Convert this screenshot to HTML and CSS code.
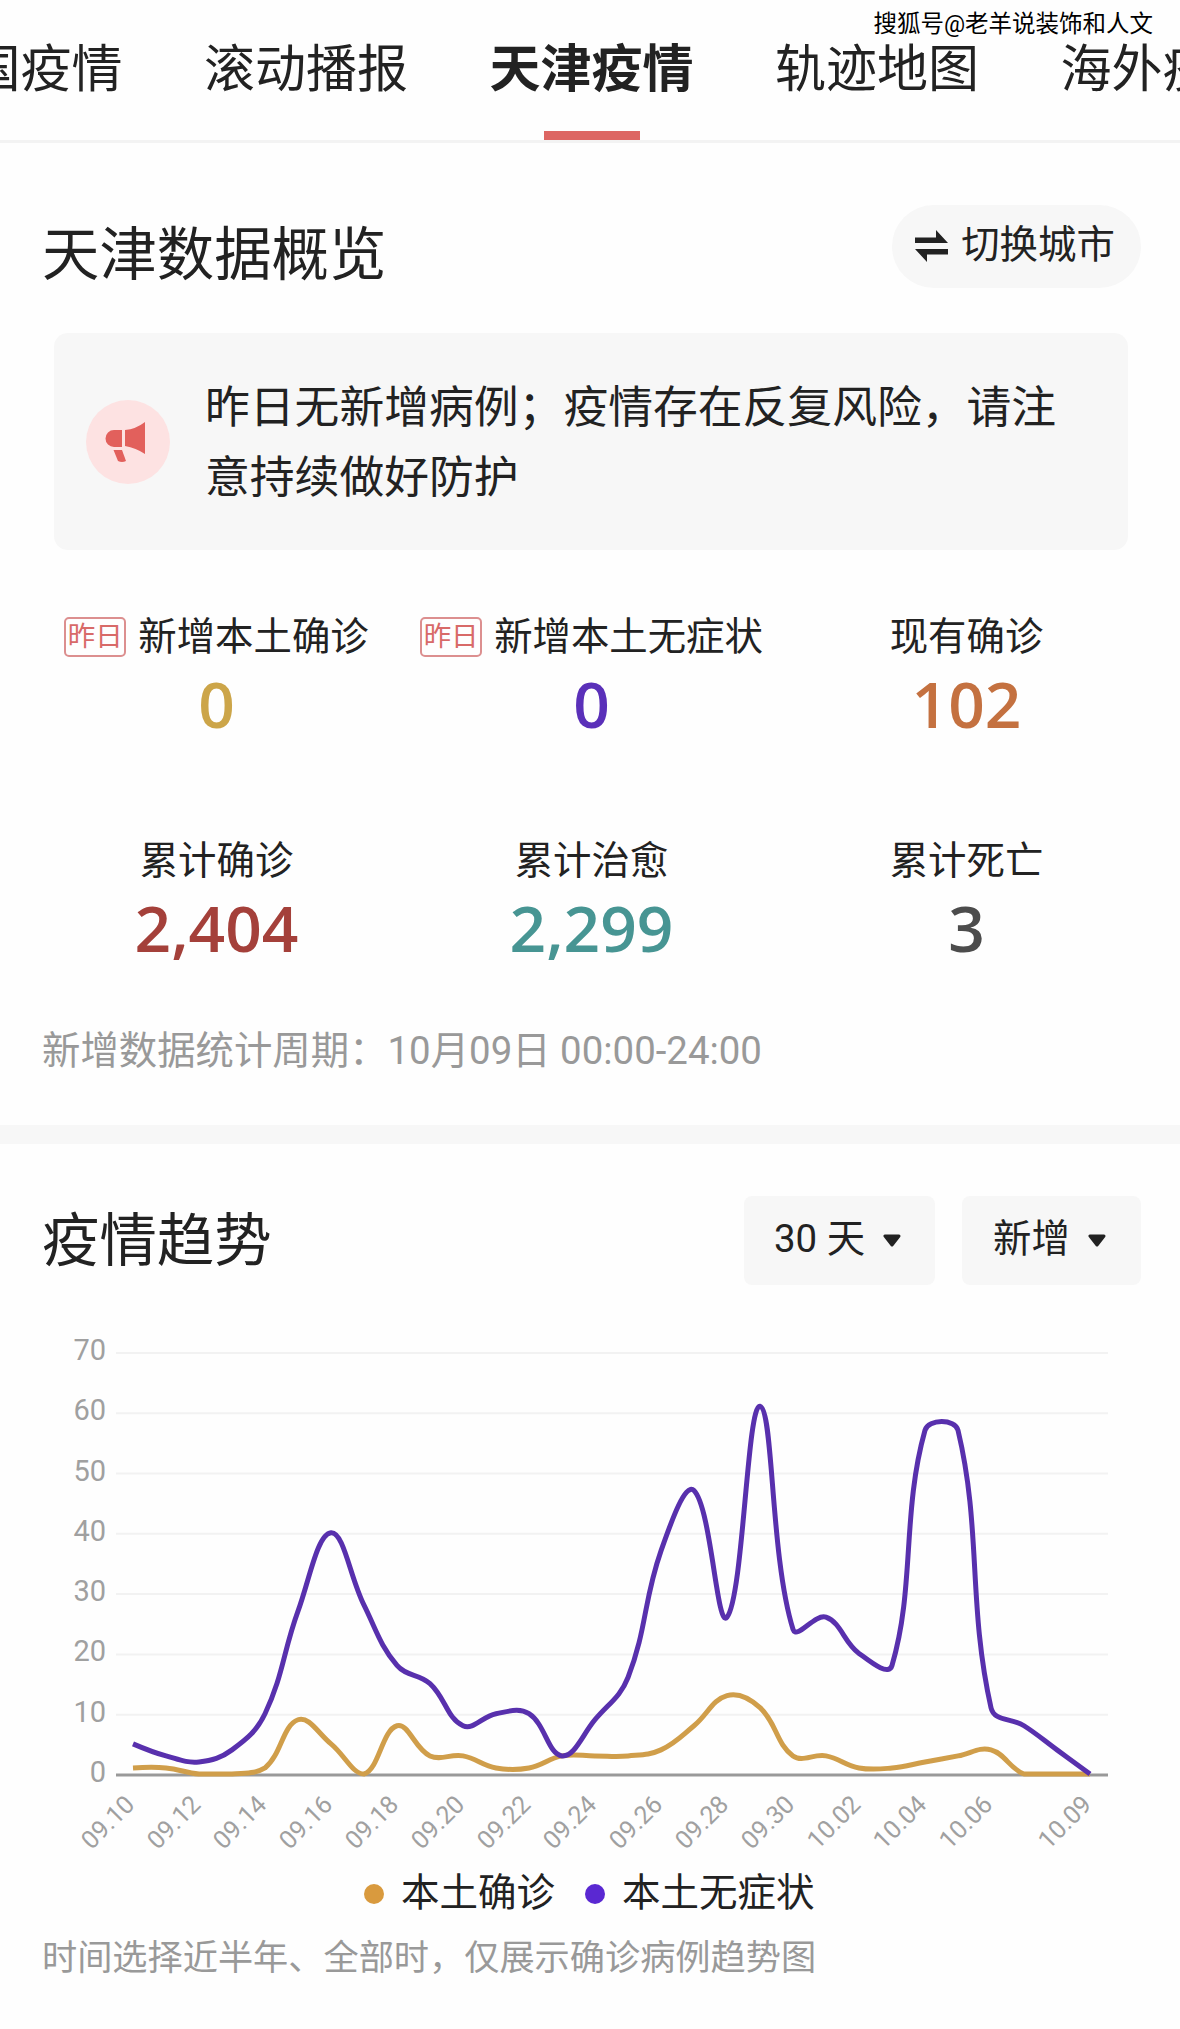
FILE: index.html
```html
<!DOCTYPE html>
<html lang="zh-CN">
<head>
  <meta charset="UTF-8" />
  <meta name="viewport" content="width=device-width, initial-scale=1.0" />
  <title>天津疫情</title>
  <link rel="stylesheet" href="styles.css">
</head>
<body>
  <div class="watermark">搜狐号@老羊说装饰和人文</div>

  <nav class="tabs">
    <a class="tab">全国疫情</a>
    <a class="tab">滚动播报</a>
    <a class="tab active">天津疫情</a>
    <a class="tab">轨迹地图</a>
    <a class="tab">海外疫情</a>
  </nav>

  <section class="overview">
    <div class="head">
      <h2>天津数据概览</h2>
      <button class="switch">
        <svg width="33" height="32" viewBox="0 0 33 32" fill="#222">
          <path d="M0 7.500H21V0L33 13H0Z" />
          <path d="M33 19H0L12 32V24.500H33Z" />
        </svg>
        切换城市
      </button>
    </div>

    <div class="notice">
      <div class="notice-icon">
        <svg width="40" height="40" viewBox="0 0 40 40" fill="#e2605c">
          <path d="M17 8H9a8.500 8.500 0 0 0 0 17H17Z" />
          <path d="M20 8Q31 7 40 0V32Q31 26 20 24Z" />
          <path d="M8.500 28H17L21 39Q17 41 13 39Z" />
        </svg>
      </div>
      <p>昨日无新增病例；疫情存在反复风险，请注意持续做好防护</p>
    </div>

    <div class="stats">
      <div class="stat">
        <div class="label"><span class="tag">昨日</span>新增本土确诊</div>
        <div class="num gold">0</div>
      </div>
      <div class="stat">
        <div class="label"><span class="tag">昨日</span>新增本土无症状</div>
        <div class="num purple">0</div>
      </div>
      <div class="stat">
        <div class="label">现有确诊</div>
        <div class="num orange">102</div>
      </div>
      <div class="stat">
        <div class="label">累计确诊</div>
        <div class="num red">2,404</div>
      </div>
      <div class="stat">
        <div class="label">累计治愈</div>
        <div class="num teal">2,299</div>
      </div>
      <div class="stat">
        <div class="label">累计死亡</div>
        <div class="num grey">3</div>
      </div>
    </div>

    <p class="period">新增数据统计周期：10月09日 00:00-24:00</p>
  </section>

  <section class="trend">
    <div class="head">
      <h2>疫情趋势</h2>
      <div class="selects">
        <button class="select">30 天
          <svg class="arrow" width="18" height="13" viewBox="0 0 18 13"><path d="M2 2H16L9 11Z" /></svg>
        </button>
        <button class="select">新增
          <svg class="arrow" width="18" height="13" viewBox="0 0 18 13"><path d="M2 2H16L9 11Z" /></svg>
        </button>
      </div>
    </div>

    <svg id="chart" class="chart" width="1180" height="580" viewBox="0 0 1180 580"></svg>

    <div class="legend">
      <span class="legend-item"><i class="dot dot-gold"></i>本土确诊</span>
      <span class="legend-item"><i class="dot dot-purple"></i>本土无症状</span>
    </div>
    <p class="note">时间选择近半年、全部时，仅展示确诊病例趋势图</p>
  </section>

  <script src="chart.js"></script>
</body>
</html>
```
FILE: styles.css
```css
body {
  margin: 0;
  background: #fefefe;
  color: #222;
  font-family: Roboto, "Noto Sans CJK SC", sans-serif;
  overflow: hidden;
}
h2, p {
  margin: 0;
  font-weight: 400;
}
button {
  border: none;
  padding: 0;
  color: #222;
  background: #f7f7f7;
  font-family: inherit;
  font-size: 38.4px;
  line-height: 60px;
}
.watermark {
  position: absolute;
  top: 8px;
  right: 27px;
  font-size: 23.5px;
  line-height: 32px;
  color: #000;
  text-shadow: -1px -1px 0 #fff, 1px 1px 0 #fff;
  white-space: nowrap;
}

/* tabs */
.tabs {
  display: flex;
  justify-content: center;
  gap: 81.5px;
  height: 140px;
  padding-left: 3px;
  border-bottom: 3px solid #f3f3f3;
  overflow: hidden;
}
.tab {
  flex: none;
  height: 140px;
  font-size: 51px;
  line-height: 140px;
  white-space: nowrap;
}
.tab.active {
  font-weight: 700;
}
.tab.active::after {
  content: "";
  display: block;
  width: 96px;
  height: 9px;
  margin: -9px auto 0;
  background: #dd6663;
}

/* overview */
.overview {
  height: 920px;
  padding-top: 62px;
  border-bottom: 19px solid #f7f7f7;
}
.head {
  display: flex;
  justify-content: space-between;
  padding: 0 39px 0 42px;
}
.head h2 {
  font-size: 57.4px;
  line-height: 102px;
}
.switch {
  display: flex;
  align-items: center;
  justify-content: center;
  gap: 13px;
  box-sizing: border-box;
  width: 249px;
  height: 83px;
  padding: 0 3px 4px 0;
  border-radius: 42px;
}
.switch svg {
  margin-top: 2px;
}
.notice {
  display: flex;
  align-items: center;
  box-sizing: border-box;
  width: 1074px;
  height: 217px;
  margin: 26px 0 0 54px;
  padding-left: 32px;
  background: #f7f7f7;
  border-radius: 14px;
}
.notice-icon {
  display: flex;
  flex: none;
  align-items: center;
  justify-content: center;
  width: 84px;
  height: 84px;
  margin-right: 35px;
  border-radius: 50%;
  background: #fde2e2;
}
.notice-icon svg {
  margin-right: 6px;
}
.notice p {
  width: 870px;
  padding-top: 2px;
  font-size: 44.8px;
  line-height: 70px;
}
.stats {
  display: grid;
  grid-template-columns: repeat(3, 375px);
  row-gap: 82px;
  margin: 57px 0 0 29px;
}
.stat {
  height: 142px;
  text-align: center;
}
.label {
  display: flex;
  align-items: center;
  justify-content: center;
  height: 60px;
  font-size: 38.4px;
  line-height: 58px;
  white-space: nowrap;
}
.tag {
  width: 58px;
  height: 36px;
  margin-right: 12px;
  border: 2px solid #dc8f8f;
  border-radius: 5px;
  color: #d86a68;
  font-size: 27.5px;
  line-height: 36px;
}
.num {
  font-family: "Open Sans", sans-serif;
  font-size: 64px;
  font-weight: 600;
  line-height: 74px;
}
.gold { color: #cca549; }
.purple { color: #5a30b9; }
.orange { color: #c47140; }
.red { color: #a4403a; }
.teal { color: #479593; }
.grey { color: #4c4c4c; }
.period {
  margin: 48px 0 0 42px;
  font-size: 38.4px;
  line-height: 60px;
  color: #999;
}

/* trend */
.trend .head {
  height: 89px;
  padding-top: 52px;
}
.trend .head h2 {
  line-height: 91px;
}
.selects {
  display: flex;
  gap: 27px;
}
.select {
  display: flex;
  align-items: center;
  justify-content: center;
  gap: 18px;
  box-sizing: border-box;
  width: 191px;
  height: 89px;
  padding: 0 4px 3px 0;
  border-radius: 8px;
}
.select + .select {
  width: 179px;
}
.arrow {
  margin-top: 3px;
}
.arrow path {
  fill: #222;
  stroke: #222;
  stroke-width: 3;
  stroke-linejoin: round;
}
.chart {
  display: block;
}
.grid {
  stroke: #f2f2f2;
  stroke-width: 2;
}
.axis {
  stroke: #999;
  stroke-width: 3;
}
.y-label, .x-label {
  fill: #a0a0a0;
  font-size: 29px;
  text-anchor: end;
}
.x-label {
  font-size: 25px;
}
.line {
  fill: none;
  stroke-width: 5;
  stroke-linejoin: round;
}
.line-gold { stroke: #d09e4a; }
.line-purple { stroke: #5830ad; }
.legend {
  display: flex;
  gap: 30px;
  height: 56px;
  padding-left: 364px;
}
.legend-item {
  display: flex;
  align-items: center;
  font-size: 38.5px;
  line-height: 52px;
}
.dot {
  width: 20px;
  height: 20px;
  margin-top: 2px;
  margin-right: 17px;
  border-radius: 50%;
}
.dot-gold { background: #d99a3e; }
.dot-purple { background: #5a28d2; }
.note {
  margin: 7px 0 0 42px;
  font-size: 35.2px;
  line-height: 60px;
  color: #999;
}
```
FILE: chart.js
```js
const confirmed = [1, 1, 0, 0, 1, 9, 5, 0, 8, 3, 3, 1, 1, 3, 3, 3, 4, 8, 13, 11, 3, 3, 1, 1, 2, 3, 4, 0, 0, 0];
const asymptomatic = [5, 3, 2, 4, 10, 27, 40, 28, 18, 15, 8, 10, 10, 3, 9, 16, 37, 47, 26, 61, 24, 26, 20, 18, 57, 57, 11, 8, 4, 0];
const dates = ['09.10', '09.12', '09.14', '09.16', '09.18', '09.20', '09.22', '09.24', '09.26', '09.28', '09.30', '10.02', '10.04', '10.06', '10.09'];

const base = 489;
const toX = i => 133 + i * 33;
const toY = v => base - v * 6.03;

function smoothPath(data) {
  const pts = data.map((v, i) => [toX(i), toY(v)]);
  const cps = pts.map((p, i) => {
    if (i === 0 || i === pts.length - 1) return [p, p];
    const prev = pts[i - 1];
    const next = pts[i + 1];
    const d0 = Math.hypot(p[0] - prev[0], p[1] - prev[1]);
    const d1 = Math.hypot(next[0] - p[0], next[1] - p[1]);
    const vx = (next[0] - prev[0]) * 0.4 / (d0 + d1);
    const vy = (next[1] - prev[1]) * 0.4 / (d0 + d1);
    return [
      [p[0] - vx * d0, Math.min(base, p[1] - vy * d0)],
      [p[0] + vx * d1, Math.min(base, p[1] + vy * d1)]
    ];
  });
  let d = `M${pts[0]}`;
  for (let i = 1; i < pts.length; i++) {
    d += ` C${cps[i - 1][1]} ${cps[i][0]} ${pts[i]}`;
  }
  return d;
}

let svg = '';
for (let v = 0; v <= 70; v += 10) {
  const y = toY(v) + 1;
  svg += `<line class="${v ? 'grid' : 'axis'}" x1="116" x2="1108" y1="${y}" y2="${y}" />`;
  svg += `<text class="y-label" x="106" y="${y + 7}">${v}</text>`;
}
dates.forEach((date, i) => {
  const x = toX(date === '10.09' ? 29 : i * 2) + 3;
  svg += `<text class="x-label" transform="translate(${x} 521) rotate(-45)">${date}</text>`;
});
svg += `<path class="line line-gold" d="${smoothPath(confirmed)}" />`;
svg += `<path class="line line-purple" d="${smoothPath(asymptomatic)}" />`;
document.getElementById('chart').innerHTML = svg;
```
